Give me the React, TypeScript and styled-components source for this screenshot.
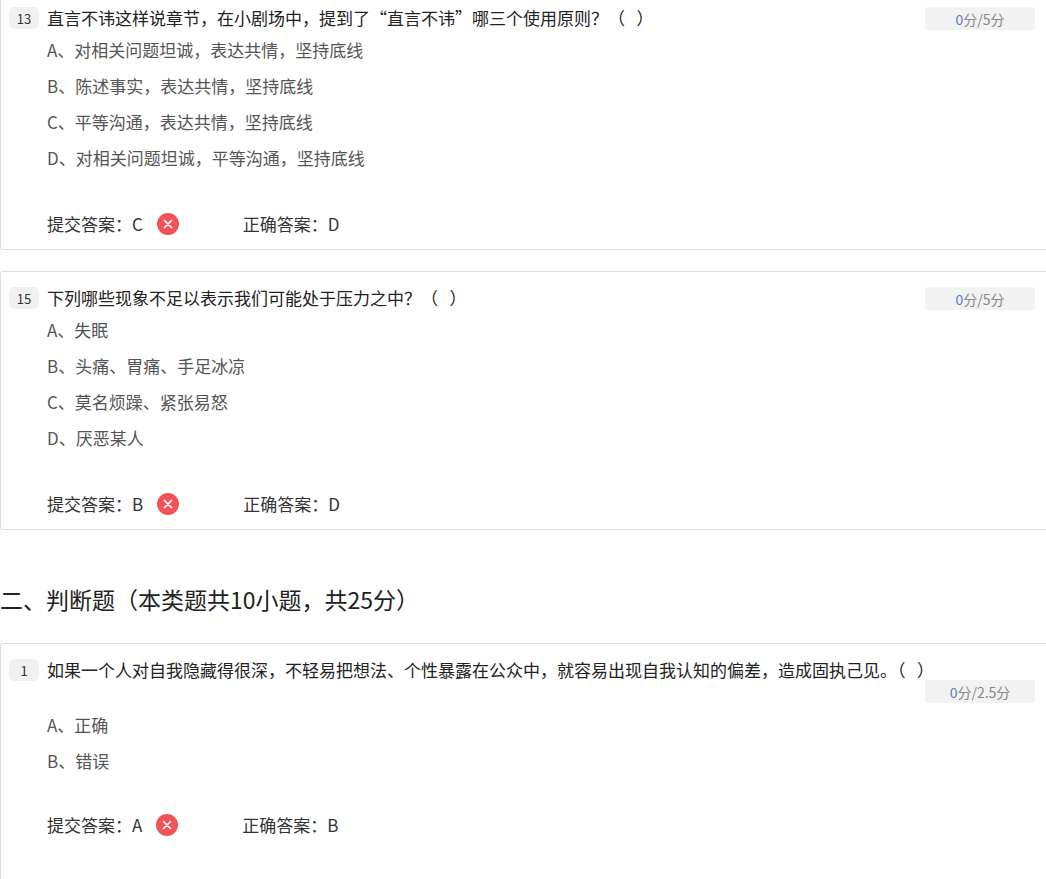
import * as React from "react";
import styled, { createGlobalStyle } from "styled-components";

const Global = createGlobalStyle`
  body { margin: 0; background: #fff; font-family: "Microsoft YaHei", "Noto Sans CJK SC", sans-serif; overflow: hidden; }
`;

const Page = styled.div`
  margin-top: -9px;
  width: 1060px;
`;

const Card = styled.div<{ $h?: number }>`
  border: 1px solid #dcdcdc;
  border-radius: 3px;
  background: #fff;
  padding: 15px 0 0 8px;
  margin-bottom: 21px;
  height: ${p => p.$h ?? 259}px;
  box-sizing: border-box;
`;

const QRow = styled.div<{ $pr?: number }>`
  display: flex;
  align-items: flex-start;
  gap: 8px;
  padding-right: ${p => p.$pr ?? 0}px;
`;

const Num = styled.span`
  flex: none;
  min-width: 30px;
  height: 22px;
  border-radius: 5px;
  background: #f0f0f0;
  color: #333;
  font-size: 13px;
  display: flex;
  align-items: center;
  justify-content: center;
`;

const QText = styled.div`
  flex: 1;
  font-size: 17px;
  line-height: 25px;
  color: #222;
  margin-top: -2px;
`;

const Score = styled.span`
  flex: none;
  width: 110px;
  height: 23px;
  border-radius: 3px;
  background: #f2f2f2;
  color: #888;
  font-size: 14px;
  display: flex;
  align-items: center;
  justify-content: center;
  margin-right: 24px;
  b { font-weight: normal; color: #5a7fb8; }
`;

const ScoreLine = styled.div`
  display: flex;
  justify-content: flex-end;
  margin-top: -2px;
`;

const Options = styled.div<{ $top?: number }>`
  padding-left: 38px;
  margin-top: ${p => p.$top ?? 7}px;
  display: flex;
  flex-direction: column;
  gap: 11px;
`;

const Opt = styled.div`
  font-size: 17px;
  line-height: 25px;
  color: #555;
`;

const Answer = styled.div<{ $top: number }>`
  display: flex;
  align-items: center;
  padding-left: 38px;
  margin-top: ${p => p.$top}px;
  font-size: 17px;
  color: #333;
`;

const Wrong = styled.span`
  width: 22px;
  height: 22px;
  border-radius: 50%;
  background: #ef5558;
  display: inline-flex;
  align-items: center;
  justify-content: center;
  margin: 0 64px 0 14px;
`;

const Heading = styled.h2`
  margin: 49px 0 24px 0;
  font-size: 23px;
  font-weight: normal;
  color: #222;
  line-height: 40px;
`;

const X = () => (
  <Wrong>
    <svg width="10" height="10" viewBox="0 0 10 10">
      <path d="M1.5 1.5L8.5 8.5M8.5 1.5L1.5 8.5" stroke="#fff" strokeWidth="1.6" strokeLinecap="round" />
    </svg>
  </Wrong>
);

interface Q {
  num: string;
  text: string;
  opts: string[];
  mine: string;
  right: string;
  score: string;
}

const paren = "（\u00a0\u00a0\u00a0）";

const single: Q[] = [
  {
    num: "13",
    text: `直言不讳这样说章节，在小剧场中，提到了“直言不讳”哪三个使用原则？${paren}`,
    opts: ["A、对相关问题坦诚，表达共情，坚持底线", "B、陈述事实，表达共情，坚持底线", "C、平等沟通，表达共情，坚持底线", "D、对相关问题坦诚，平等沟通，坚持底线"],
    mine: "C",
    right: "D",
    score: "5",
  },
  {
    num: "15",
    text: `下列哪些现象不足以表示我们可能处于压力之中？${paren}`,
    opts: ["A、失眠", "B、头痛、胃痛、手足冰凉", "C、莫名烦躁、紧张易怒", "D、厌恶某人"],
    mine: "B",
    right: "D",
    score: "5",
  },
];

function AnswerLine({ mine, right, top }: { mine: string; right: string; top: number }) {
  return (
    <Answer $top={top}>
      <span>提交答案：{mine}</span>
      <X />
      <span>正确答案：{right}</span>
    </Answer>
  );
}

export default function App() {
  return (
    <Page>
      <Global />
      {single.map(q => (
        <Card key={q.num}>
          <QRow>
            <Num>{q.num}</Num>
            <QText>{q.text}</QText>
            <Score>
              <b>0</b>分/{q.score}分
            </Score>
          </QRow>
          <Options>
            {q.opts.map(o => (
              <Opt key={o}>{o}</Opt>
            ))}
          </Options>
          <AnswerLine mine={q.mine} right={q.right} top={41} />
        </Card>
      ))}
      <Heading>二、判断题（本类题共10小题，共25分）</Heading>
      <Card $h={238}>
        <QRow $pr={40}>
          <Num>1</Num>
          <QText>如果一个人对自我隐藏得很深，不轻易把想法、个性暴露在公众中，就容易出现自我认知的偏差，造成固执己见。{paren}</QText>
        </QRow>
        <ScoreLine>
          <Score>
            <b>0</b>分/2.5分
          </Score>
        </ScoreLine>
        <Options $top={9}>
          <Opt>A、正确</Opt>
          <Opt>B、错误</Opt>
        </Options>
        <AnswerLine mine="A" right="B" top={39} />
      </Card>
    </Page>
  );
}
